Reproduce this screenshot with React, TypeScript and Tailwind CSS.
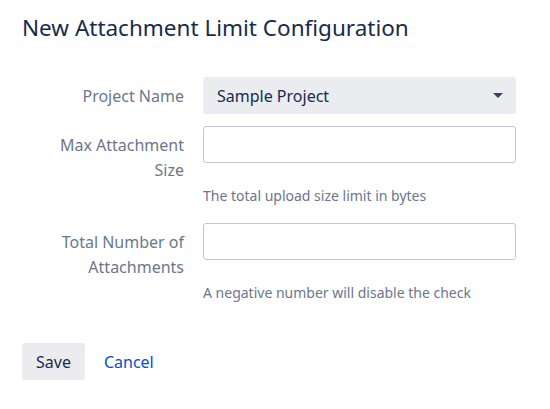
const font = { fontFamily: '"Noto Sans", "Open Sans", sans-serif' };

const Field = ({
  label,
  help,
  children,
}: {
  label: React.ReactNode;
  help?: string;
  children: React.ReactNode;
}) => (
  <div className={`flex gap-[19px] ${help ? "pb-[5px]" : ""}`}>
    <label className="w-[162px] shrink-0 pt-[7px] text-right text-[16px] leading-[25px] text-[#6b778c]">
      {label}
    </label>
    <div className="w-[313px]">
      {children}
      {help && (
        <p className="mt-[23px] text-[14px] leading-[20px] text-[#6b778c]">{help}</p>
      )}
    </div>
  </div>
);

export default function App() {
  return (
    <div className="min-h-screen bg-white px-[22px] pt-[12px]" style={font}>
      <h1 className="text-[22.5px] leading-[32px] text-[#172b4d]">
        New Attachment Limit Configuration
      </h1>

      <form className="mt-[33px] flex flex-col gap-[12px]">
        <Field label="Project Name">
          <button
            type="button"
            className="flex h-[37px] w-full items-center justify-between rounded-[3px] bg-[#ebecf0] pl-[14px] pr-[13px] text-[16px] text-[#172b4d]"
          >
            <span>Sample Project</span>
            <svg width="10" height="5" viewBox="0 0 10 5" className="text-[#344563]">
              <path d="M0 0h10L5 5z" fill="currentColor" />
            </svg>
          </button>
        </Field>

        <Field label={<>Max Attachment<br />Size</>} help="The total upload size limit in bytes">
          <input className="block h-[37px] w-full rounded-[3px] border border-[#c1c7d0] bg-white px-2" />
        </Field>

        <Field
          label={<>Total Number of<br />Attachments</>}
          help="A negative number will disable the check"
        >
          <input className="block h-[37px] w-full rounded-[3px] border border-[#c1c7d0] bg-white px-2" />
        </Field>
      </form>

      <div className="mt-[35px] flex items-center gap-[19px]">
        <button className="h-[37px] rounded-[3px] bg-[#ebecf0] px-[14px] text-[16px] text-[#172b4d]">
          Save
        </button>
        <a href="#" className="text-[16px] text-[#0052cc]">
          Cancel
        </a>
      </div>
    </div>
  );
}
